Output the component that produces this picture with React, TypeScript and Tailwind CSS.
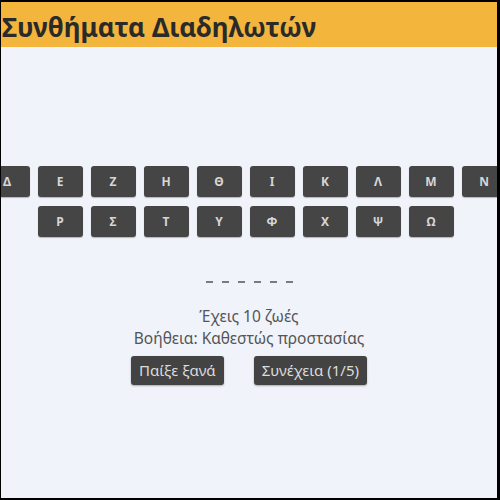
const row1 = ["Α", "Β", "Γ", "Δ", "Ε", "Ζ", "Η", "Θ", "Ι", "Κ", "Λ", "Μ", "Ν", "Ξ", "Ο", "Π"];
const row2 = ["Ρ", "Σ", "Τ", "Υ", "Φ", "Χ", "Ψ", "Ω"];

function Key({ letter }: { letter: string }) {
  return (
    <button className="w-[45px] h-[31px] shrink-0 rounded-[3px] bg-[#454545] text-[#d6d6d6] text-[12px] font-bold flex items-center justify-center shadow-[0_1px_1px_rgba(0,0,0,0.25)]">
      {letter}
    </button>
  );
}

export default function App() {
  return (
    <div
      className="w-[500px] h-[500px] overflow-hidden border-l border-t-2 border-r-[3px] border-b-2 border-black bg-[#f0f3fa] flex flex-col"
      style={{ fontFamily: '"Noto Sans", "Open Sans", sans-serif' }}
    >
      <header className="h-[45px] bg-[#f4b53c] flex items-center px-[1px] shrink-0">
        <h1 className="text-[26px] font-bold text-[#2a2a2a] leading-none pt-[4px]">Συνθήματα Διαδηλωτών</h1>
      </header>

      <main className="flex flex-col items-center pt-[119px]">
        <div className="flex flex-col gap-[9px] w-full pr-[7px]">
          <div className="flex justify-center gap-[8px]">
            {row1.map((l) => (
              <Key key={l} letter={l} />
            ))}
          </div>
          <div className="flex justify-center gap-[8px]">
            {row2.map((l) => (
              <Key key={l} letter={l} />
            ))}
          </div>
        </div>

        <div className="mt-[44px] flex gap-[9px]">
          {[0, 1, 2, 3, 4, 5].map((i) => (
            <span key={i} className="w-[7px] h-[2px] bg-[#7a7a7a]" />
          ))}
        </div>

        <p className="mt-[22px] text-[15.5px] text-[#555] leading-[22px]">Έχεις 10 ζωές</p>
        <p className="text-[15.5px] text-[#555] leading-[22px]">Βοήθεια: Καθεστώς προστασίας</p>

        <div className="mt-[7px] flex gap-[30px]">
          <button className="h-[29px] px-[8px] rounded-[3px] bg-[#434343] text-[#dcdcdc] text-[15px] shadow-[0_1px_2px_rgba(0,0,0,0.3)]">
            Παίξε ξανά
          </button>
          <button className="h-[29px] px-[8px] rounded-[3px] bg-[#434343] text-[#dcdcdc] text-[15px] shadow-[0_1px_2px_rgba(0,0,0,0.3)]">
            Συνέχεια (1/5)
          </button>
        </div>
      </main>
    </div>
  );
}
